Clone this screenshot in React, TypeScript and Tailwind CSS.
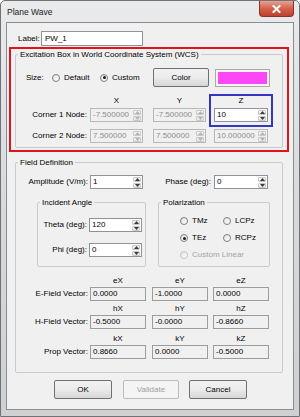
import React from 'react';

type FieldProps = {
  value: string;
  width: string;
  disabled?: boolean;
  spin?: boolean;
  readOnly?: boolean;
};

const SpinArrows: React.FC<{ disabled?: boolean }> = ({ disabled }) => {
  const fill = disabled ? '#b4b4b4' : '#3c3c3c';
  return (
    <div className="flex w-[9px] flex-col gap-px py-px pr-px">
      <div className="flex flex-1 items-center justify-center rounded-[1px] border border-[#c9c9c9] bg-gradient-to-b from-[#f8f8f8] to-[#e4e4e4]">
        <svg width="5" height="3" viewBox="0 0 5 3">
          <path d="M0 3 L2.5 0 L5 3 Z" fill={fill} />
        </svg>
      </div>
      <div className="flex flex-1 items-center justify-center rounded-[1px] border border-[#c9c9c9] bg-gradient-to-b from-[#f8f8f8] to-[#e4e4e4]">
        <svg width="5" height="3" viewBox="0 0 5 3">
          <path d="M0 0 L5 0 L2.5 3 Z" fill={fill} />
        </svg>
      </div>
    </div>
  );
};

const Field: React.FC<FieldProps> = ({ value, width, disabled, spin, readOnly }) => {
  const box = disabled
    ? 'border-[#b9b9b9] bg-[#f0f0f0] text-[#8d8d8d]'
    : readOnly
      ? 'border-[#9c9c9c] bg-[#f0f0f0] text-black'
      : 'border-[#8e939b] bg-white text-black';
  return (
    <div className={`flex h-[14px] shrink-0 overflow-hidden border ${box} ${width}`}>
      <div className="flex-1 overflow-hidden whitespace-nowrap pl-[2px] leading-[12px]">{value}</div>
      {spin && <SpinArrows disabled={disabled} />}
    </div>
  );
};

const Radio: React.FC<{ label: string; checked?: boolean; disabled?: boolean; width: string }> = ({
  label,
  checked,
  disabled,
  width,
}) => (
  <div className={`flex shrink-0 items-center ${width} ${disabled ? 'text-[#a3a3a3]' : 'text-black'}`}>
    <span
      className={`flex h-[8px] w-[8px] items-center justify-center rounded-full border bg-gradient-to-br from-[#e2e2e2] to-white ${
        disabled ? 'border-[#c4c4c4]' : 'border-[#7e7e7e]'
      }`}
    >
      {checked && <span className="h-[3px] w-[3px] rounded-full bg-[#1a1a1a]" />}
    </span>
    <span className="ml-[4px] leading-[10px]">{label}</span>
  </div>
);

const Btn: React.FC<{ label: string; width: string; disabled?: boolean; className?: string }> = ({
  label,
  width,
  disabled,
  className = '',
}) => (
  <div
    className={`flex h-[19px] shrink-0 items-center justify-center rounded-[2px] border ${width} ${className} ${
      disabled
        ? 'border-[#b8bcbf] bg-[#f4f4f4] text-[#a0a0a0]'
        : 'border-[#707070] bg-gradient-to-b from-[#f2f2f2] via-[#ebebeb] to-[#d6d6d6] text-black'
    }`}
  >
    {label}
  </div>
);

const Group: React.FC<{ title: string; className: string; children: React.ReactNode }> = ({
  title,
  className,
  children,
}) => (
  <fieldset className={`shrink-0 rounded-[2px] border border-[#c6cbcf] ${className}`}>
    <legend className="ml-[2px] px-[2px] leading-[11px] text-black">{title}</legend>
    {children}
  </fieldset>
);

const Header: React.FC<{ text: string }> = ({ text }) => (
  <div className="h-[10px] text-center leading-[10px]">{text}</div>
);

const vectors = [
  { label: 'E-Field Vector:', keys: ['eX', 'eY', 'eZ'], values: ['0.0000', '-1.0000', '0.0000'], mt: 'mt-[9px]' },
  { label: 'H-Field Vector:', keys: ['hX', 'hY', 'hZ'], values: ['-0.5000', '-0.0000', '-0.8660'], mt: 'mt-[3px]' },
  { label: 'Prop Vector:', keys: ['kX', 'kY', 'kZ'], values: ['0.8660', '0.0000', '-0.5000'], mt: 'mt-[5px]' },
];

export default function App() {
  return (
    <div className="flex h-[417px] w-[300px] flex-col rounded-t-[5px] border border-[#6f7276] bg-gradient-to-b from-[#e9eaec] via-[#d8d9db] to-[#cfd0d2] font-['Liberation_Sans',Arial,sans-serif] text-[8px] text-black">
      {/* title bar */}
      <div className="flex h-[21px] shrink-0 items-start">
        <span className="ml-[6px] mt-[6px] text-[8.5px] leading-[10px] text-[#1b1b1b]">Plane Wave</span>
        <div className="ml-auto mr-[5px] flex h-[16px] w-[35px] items-center justify-center rounded-b-[4px] border border-t-0 border-[#8c3226] bg-gradient-to-b from-[#e5a391] via-[#d2614c] to-[#c0402c]">
          <svg width="9" height="8" viewBox="0 0 9 8">
            <path d="M1.5 1 L7.5 7 M7.5 1 L1.5 7" stroke="#ffffff" strokeWidth="2" strokeLinecap="square" />
          </svg>
        </div>
      </div>

      {/* client area */}
      <div className="ml-[5px] flex h-[388px] w-[288px] shrink-0 flex-col border border-[#8a8d91] bg-[#f0f0f0]">
        {/* label */}
        <div className="mt-[8px] flex h-[15px] items-center">
          <span className="ml-[11px] w-[23px]">Label:</span>
          <div className="flex h-[15px] w-[102px] items-center border border-[#8e939b] bg-white pl-[3px]">PW_1</div>
        </div>

        {/* excitation box (red annotation) */}
        <div className="ml-[2px] mt-[1px] h-[105px] w-[280px] shrink-0 border-2 border-[#e3131c]">
          <Group title="Excitation Box in World Coordinate System (WCS)" className="ml-[4px] h-[99px] w-[268px]">
            <div className="mt-[8px] flex h-[19px] items-center">
              <span className="ml-[10px] w-[26px] shrink-0">Size:</span>
              <Radio label="Default" width="w-[48px]" />
              <Radio label="Custom" checked width="w-[53px]" />
              <Btn label="Color" width="w-[56px]" />
              <div className="ml-[6px] flex h-[18px] w-[55px] shrink-0 items-center justify-center border border-[#a9a9a9] bg-[#f4f4f4]">
                <div className="h-[12px] w-[49px] bg-[#fb47f6]" />
              </div>
            </div>

            <div className="mt-[9px] flex items-start">
              <div className="flex w-[74px] shrink-0 flex-col">
                <div className="h-[10px]" />
                <div className="mt-[2px] flex h-[14px] items-center justify-end pr-[3px]">Corner 1 Node:</div>
                <div className="mt-[7px] flex h-[14px] items-center justify-end pr-[3px]">Corner 2 Node:</div>
              </div>
              <div className="flex flex-col">
                <Header text="X" />
                <div className="mt-[2px]"><Field value="-7.500000" width="w-[53px]" spin disabled /></div>
                <div className="mt-[7px]"><Field value="7.500000" width="w-[53px]" spin disabled /></div>
              </div>
              <div className="ml-[10px] flex flex-col">
                <Header text="Y" />
                <div className="mt-[2px]"><Field value="-7.500000" width="w-[53px]" spin disabled /></div>
                <div className="mt-[7px]"><Field value="7.500000" width="w-[53px]" spin disabled /></div>
              </div>
              <div className="ml-[8px] flex flex-col">
                {/* blue annotation */}
                <div className="-mx-[5px] -mt-[2px] border-2 border-[#3535c4] px-[3px] pb-[3px]">
                  <Header text="Z" />
                  <div className="mt-[2px]"><Field value="10" width="w-[54px]" spin /></div>
                </div>
                <div className="mt-[2px]"><Field value="10.000000" width="w-[54px]" spin disabled /></div>
              </div>
            </div>
          </Group>
        </div>

        {/* field definition */}
        <Group title="Field Definition" className="ml-[8px] mt-[5px] h-[216px] w-[268px]">
          <div className="mt-[7px] flex h-[14px] items-center">
            <span className="w-[74px] shrink-0 pr-[2px] text-right">Amplitude (V/m):</span>
            <Field value="1" width="w-[53px]" spin />
            <span className="w-[71px] shrink-0 pr-[3px] text-right">Phase (deg):</span>
            <Field value="0" width="w-[54px]" spin />
          </div>

          <div className="mt-[8px] flex items-start">
            <Group title="Incident Angle" className="ml-[21px] h-[70px] w-[109px]">
              <div className="mt-[10px] flex h-[14px] items-center">
                <span className="w-[51px] shrink-0 pr-[2px] text-right">Theta (deg):</span>
                <Field value="120" width="w-[53px]" spin />
              </div>
              <div className="mt-[11px] flex h-[14px] items-center">
                <span className="w-[51px] shrink-0 pr-[2px] text-right">Phi (deg):</span>
                <Field value="0" width="w-[53px]" spin />
              </div>
            </Group>
            <Group title="Polarization" className="ml-[12px] h-[70px] w-[112px]">
              <div className="ml-[21px] mt-[7px] flex flex-col gap-[5px]">
                <div className="flex h-[12px] items-center">
                  <Radio label="TMz" width="w-[43px]" />
                  <Radio label="LCPz" width="w-[40px]" />
                </div>
                <div className="flex h-[12px] items-center">
                  <Radio label="TEz" checked width="w-[43px]" />
                  <Radio label="RCPz" width="w-[40px]" />
                </div>
                <div className="flex h-[12px] items-center">
                  <Radio label="Custom Linear" disabled width="w-[80px]" />
                </div>
              </div>
            </Group>
          </div>

          {vectors.map((v) => (
            <div key={v.label} className={`${v.mt} flex items-start`}>
              <div className="flex w-[74px] shrink-0 flex-col">
                <div className="h-[10px]" />
                <div className="mt-[1px] flex h-[14px] items-center justify-end pr-[2px]">{v.label}</div>
              </div>
              {v.keys.map((k, i) => (
                <div key={k} className={`flex flex-col ${i === 1 ? 'ml-[6px]' : i === 2 ? 'ml-[5px]' : ''}`}>
                  <Header text={k} />
                  <div className="mt-[1px]"><Field value={v.values[i]} width="w-[56px]" readOnly /></div>
                </div>
              ))}
            </div>
          ))}
        </Group>

        {/* buttons */}
        <div className="mt-[7px] flex">
          <Btn label="OK" width="w-[58px]" className="ml-[47px]" />
          <Btn label="Validate" width="w-[56px]" className="ml-[11px]" disabled />
          <Btn label="Cancel" width="w-[58px]" className="ml-[10px]" />
        </div>
      </div>
    </div>
  );
}
